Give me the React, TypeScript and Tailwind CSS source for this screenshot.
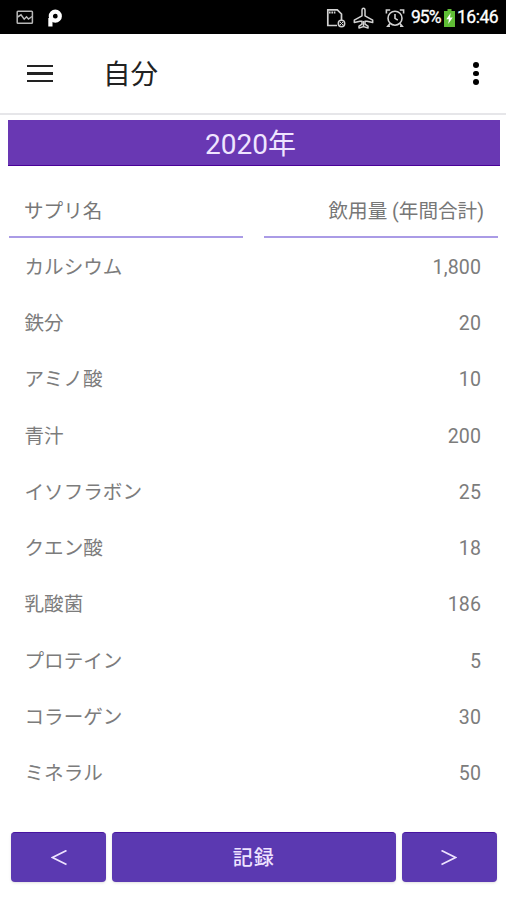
import { useState } from 'react';

type Supplement = { name: string; amount: number };

const supplements: Supplement[] = [
  { name: "カルシウム", amount: 1800 },
  { name: "鉄分", amount: 20 },
  { name: "アミノ酸", amount: 10 },
  { name: "青汁", amount: 200 },
  { name: "イソフラボン", amount: 25 },
  { name: "クエン酸", amount: 18 },
  { name: "乳酸菌", amount: 186 },
  { name: "プロテイン", amount: 5 },
  { name: "コラーゲン", amount: 30 },
  { name: "ミネラル", amount: 50 },
];

function StatusBar() {
  return (
    <div className="flex h-[34px] items-center bg-black pt-px pl-4 pr-[7px] text-white">
      {/* Notifications */}
      <svg className="h-[15px] w-[18px]" viewBox="0 0 18 15" fill="none" stroke="#b8b8b8" strokeWidth="1.5">
        <rect x="1.2" y="1.2" width="15.2" height="12" rx="0.8" />
        <path d="M1.5 7 5 4.8l3.2 4.4 2.3-2.4 2 2.2L16 6.5" strokeWidth="1.5" />
      </svg>
      <svg className="ml-[13px] h-[18px] w-[16px]" viewBox="0 0 16 18" fill="none" stroke="white">
        <path d="M3.4 17.5V9" strokeWidth="4.2" />
        <circle cx="8.3" cy="7.2" r="4.5" strokeWidth="4.2" />
      </svg>

      {/* Device state */}
      <svg className="ml-auto h-5 w-5" viewBox="0 0 20 20" fill="none" stroke="#d2d2d2" strokeWidth="1.7">
        <path d="M11 17.5H1.8V1.8h9.5L15.5 6v6" />
        <path d="M3 4.5h7" strokeWidth="2" strokeDasharray="1.6 0.8" />
        <circle cx="15.5" cy="15.5" r="3.2" strokeWidth="1.5" />
        <path d="m14 14 3 3m0-3-3 3" strokeWidth="1" />
      </svg>
      <svg className="ml-[7px] h-[22px] w-[21px]" viewBox="0 0 21 22" fill="none" stroke="#d2d2d2" strokeWidth="1.5" strokeLinejoin="round">
        <path d="M10.5 1.2c-1 0-1.5 1-1.5 2.2v5.4l-7.7 4.4v2.3L7 14.2h2v3l-3 1.9V21l4.5-1.4L15 21v-1.9l-3-1.9v-3h2l5.7 1.3v-2.3L12 8.8V3.4c0-1.2-.5-2.2-1.5-2.2Z" />
        <path d="M10.5 14v6" />
      </svg>
      <svg className="ml-[11px] h-[20px] w-[20px]" viewBox="0 0 20 20" fill="none" stroke="#d2d2d2" strokeWidth="1.6">
        <circle cx="10" cy="10.2" r="7" />
        <path d="M10 6v4.4l2.8 1.7M1.4 5.6V2h3.8M18.6 5.6V2h-3.8M5 15.5l-2.2 2.7h2.2M15 15.5l2.2 2.7H15" />
      </svg>
      <span className="ml-[6px] mt-px w-[33px] text-[17.5px] leading-none tracking-[-1px] [-webkit-text-stroke:0.3px_white]">95%</span>
      <svg className="h-[18px] w-[11px]" viewBox="0 0 11 18">
        <path d="M3.5 0h4v2H11v16H0V2h3.5Z" fill="#5fbd35" />
        <path d="M6.7 4 2.3 10.2h2.6L4.2 15l4.5-6.6H6Z" fill="white" />
      </svg>
      <span className="ml-[2px] mt-px w-[42px] text-[17.5px] leading-none tracking-[-0.5px] [-webkit-text-stroke:0.3px_white]">16:46</span>
    </div>
  );
}

function AppBar() {
  return (
    <div className="flex h-[81px] items-center border-b-2 border-[#e6e6e9] pl-[27px] pr-[27.5px]">
      <button aria-label="menu" className="flex w-[26px] flex-col gap-[5px]">
        <span className="h-[2.5px] bg-[#222]" />
        <span className="h-[2.5px] bg-[#222]" />
        <span className="h-[2.5px] bg-[#222]" />
      </button>
      <h1 className="ml-[50px] mt-0.5 text-[27.5px] leading-10 font-normal text-[#222]">自分</h1>
      <button aria-label="more" className="ml-auto flex flex-col gap-[3px]">
        <span className="size-[5.5px] rounded-full bg-black" />
        <span className="size-[5.5px] rounded-full bg-black" />
        <span className="size-[5.5px] rounded-full bg-black" />
      </button>
    </div>
  );
}

function App() {
  const [year, setYear] = useState(2020);

  return (
    <div className="flex h-[900px] w-[506px] flex-col overflow-hidden bg-white font-['Roboto','Noto_Sans_CJK_JP',sans-serif]">
      <StatusBar />
      <AppBar />

      <div className="mt-[5px] ml-2 mr-[6px] flex h-[46px] items-center justify-center border-b border-[#4a0098] bg-[#6938b3] pt-1 pr-[7px] text-[28px] leading-none text-[#efe5ff]">
        {year}年
      </div>

      {/* Column titles */}
      <div className="mt-5 grid grid-cols-2 gap-[21px] pl-[9px] pr-2 text-[19.6px] leading-none text-[#777]">
        <div className="flex h-[52px] items-center border-b-2 border-[#aa9be6] pt-px pl-[15px]">サプリ名</div>
        <div className="flex h-[52px] items-center justify-end border-b-2 border-[#aa9be6] pt-px pr-[14px]">飲用量 (年間合計)</div>
      </div>

      {/* Yearly totals */}
      <div className="pt-[1.5px] text-[19.6px] leading-none text-[#7c7c7c]">
        {supplements.map((item) => (
          <div key={item.name} className="flex h-[56.25px] items-center justify-between pl-[24.5px] pr-[25px]">
            <span>{item.name}</span>
            <span className="tracking-[0.1px]">{item.amount.toLocaleString("en-US")}</span>
          </div>
        ))}
      </div>

      <div className="mt-auto mb-[18px] flex h-[50px] gap-[6px] pl-[11px] pr-[9.5px] text-[20px] text-white">
        <button className="w-[95px] rounded-[4px] border-t border-[#4714a0] bg-[#5b39b1] shadow" onClick={() => setYear(year - 1)}>
          <svg className="mx-auto h-4 w-4" viewBox="0 0 16 16" fill="none" stroke="#eee3ff" strokeWidth="1.7">
            <path d="M15.5 .5 1.5 7.5l14 7" />
          </svg>
        </button>
        <button className="flex-1 rounded-[4px] border-t border-[#4714a0] bg-[#5b39b1] font-medium tracking-[1px] text-[#eee3ff] shadow">記録</button>
        <button className="w-[95px] rounded-[4px] border-t border-[#4714a0] bg-[#5b39b1] shadow" onClick={() => setYear(year + 1)}>
          <svg className="mx-auto h-4 w-4" viewBox="0 0 16 16" fill="none" stroke="#eee3ff" strokeWidth="1.7">
            <path d="m.5 .5 14 7-14 7" />
          </svg>
        </button>
      </div>
    </div>
  );
}

export default App;
